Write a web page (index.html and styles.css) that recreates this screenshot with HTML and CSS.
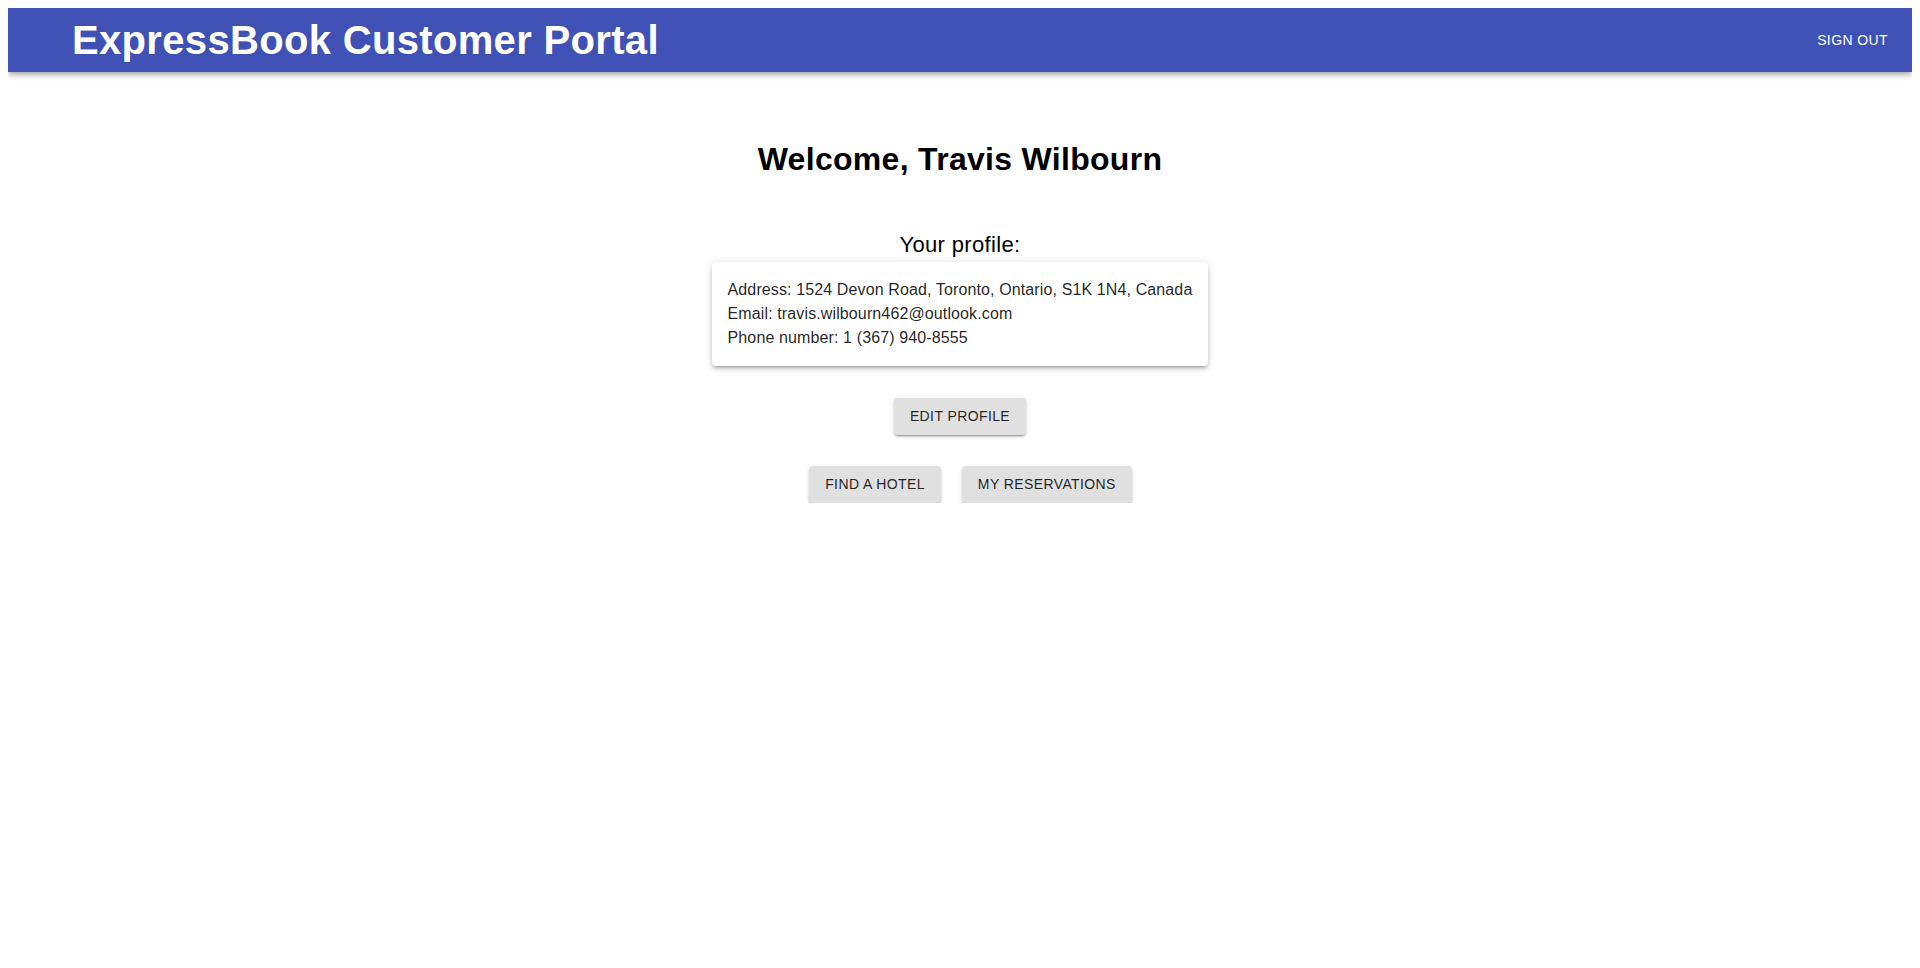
FILE: index.html
```html
<!DOCTYPE html>
<html lang="en">
<head>
<meta charset="utf-8">
<title>ExpressBook Customer Portal</title>
<link rel="stylesheet" href="styles.css">
</head>
<body>
<header class="appbar">
  <div class="brand">ExpressBook Customer Portal</div>
  <button class="text-btn">Sign out</button>
</header>
<main class="main">
  <h1 class="welcome">Welcome, Travis Wilbourn</h1>
  <div class="profile-label">Your profile:</div>
  <div class="card">
    <div>Address: 1524 Devon Road, Toronto, Ontario, S1K 1N4, Canada</div>
    <div>Email: travis.wilbourn462@outlook.com</div>
    <div>Phone number: 1 (367) 940-8555</div>
  </div>
  <div class="row single">
    <button class="btn">Edit profile</button>
  </div>
  <div class="row pair">
    <button class="btn">Find a hotel</button>
    <button class="btn">My reservations</button>
  </div>
</main>
</body>
</html>
```
FILE: styles.css
```css
html, body {
  background: #ffffff;
}
body {
  margin: 8px;
  font-family: "Liberation Sans", Arial, Helvetica, sans-serif;
  color: #000;
}
.appbar {
  height: 64px;
  background: #3f51b5;
  color: #fff;
  display: flex;
  align-items: center;
  justify-content: space-between;
  padding: 0 16px 0 64px;
  box-shadow: 0px 2px 4px -1px rgba(0,0,0,0.2), 0px 4px 5px 0px rgba(0,0,0,0.14), 0px 1px 10px 0px rgba(0,0,0,0.12);
}
.brand {
  font-size: 40px;
  font-weight: bold;
  line-height: 48px;
  letter-spacing: 0.33px;
}
.text-btn {
  background: transparent;
  border: 0;
  color: #fff;
  font-family: inherit;
  font-size: 14px;
  line-height: 24px;
  letter-spacing: 0.4px;
  text-transform: uppercase;
  padding: 6px 8px;
  border-radius: 4px;
  cursor: pointer;
}
.main {
  display: flex;
  flex-direction: column;
  align-items: center;
}
.welcome {
  margin: 69px 0 0;
  font-size: 32px;
  line-height: 37px;
  font-weight: bold;
  letter-spacing: 0.3px;
}
.profile-label {
  margin-top: 54px;
  font-size: 22px;
  line-height: 25px;
  letter-spacing: 0.35px;
}
.card {
  margin-top: 5px;
  padding: 16px;
  font-size: 16px;
  line-height: 24px;
  letter-spacing: 0.12px;
  color: rgba(0,0,0,0.87);
  background: #fff;
  border-radius: 4px;
  box-shadow: 0px 3px 3px -2px rgba(0,0,0,0.2), 0px 3px 4px 0px rgba(0,0,0,0.14), 0px 1px 8px 0px rgba(0,0,0,0.12);
}
.row {
  display: flex;
  justify-content: center;
  margin-top: 32px;
}
.pair {
  margin-top: 31.5px;
}
.pair .btn {
  margin-left: 21px;
}
.btn {
  background: #e0e0e0;
  color: rgba(0,0,0,0.87);
  border: 0;
  border-radius: 4px;
  padding: 6px 16px;
  min-width: 64px;
  font-family: inherit;
  font-size: 14px;
  line-height: 24.5px;
  letter-spacing: 0.4px;
  text-transform: uppercase;
  cursor: pointer;
  box-shadow: 0px 3px 1px -2px rgba(0,0,0,0.2), 0px 2px 2px 0px rgba(0,0,0,0.14), 0px 1px 5px 0px rgba(0,0,0,0.12);
}
```
